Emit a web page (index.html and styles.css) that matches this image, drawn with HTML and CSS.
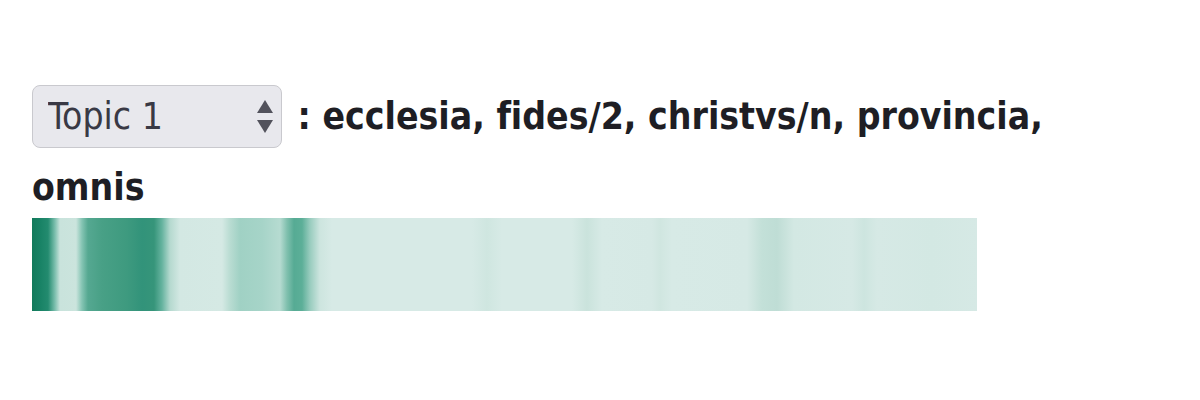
FILE: index.html
```html
<!DOCTYPE html>
<html lang="la">
<head>
<meta charset="utf-8">
<title>Topic 1</title>
<link rel="stylesheet" href="styles.css">
</head>
<body>
<main class="page">
  <h2 class="title">
    <span class="select-wrap">
      <select class="topic-select" aria-label="Topic">
        <option>Topic 1</option>
        <option>Topic 2</option>
        <option>Topic 3</option>
      </select>
      <svg class="select-arrows" width="16" height="34" viewBox="0 0 16 34" aria-hidden="true">
        <polygon points="8,0 16,13 0,13" />
        <polygon points="0,20 16,20 8,33" />
      </svg>
    </span>
    : ecclesia, fides/2, christvs/n, provincia, omnis
  </h2>
  <div class="strip"></div>
</main>
</body>
</html>
```

FILE: styles.css
```css
html, body {
  margin: 0;
  padding: 0;
  background: #ffffff;
}

.page {
  padding: 85px 0 0 32px;
  width: 1060px;
}

.title {
  margin: 0;
  font-family: "DejaVu Sans Condensed", "DejaVu Sans", sans-serif;
  font-stretch: condensed;
  font-weight: bold;
  font-size: 37px;
  line-height: 60px;
  color: #1e1e24;
  font-variant-ligatures: none;
}

.select-wrap {
  position: relative;
  display: inline-block;
  vertical-align: baseline;
  margin-right: 4px;
  margin-bottom: 10px;
}

.topic-select {
  -webkit-appearance: none;
  appearance: none;
  width: 250px;
  height: 63px;
  box-sizing: border-box;
  margin: 0;
  padding: 0 40px 0 15px;
  border: 1px solid #c9c9ce;
  border-radius: 8px;
  background: #e8e8ed;
  color: #393945;
  font-family: "DejaVu Sans Condensed", "DejaVu Sans", sans-serif;
  font-stretch: condensed;
  font-weight: normal;
  font-size: 37px;
  line-height: 61px;
  outline: none;
}

.select-arrows {
  position: absolute;
  right: 9px;
  top: 15px;
  fill: #52525c;
  pointer-events: none;
}

.strip {
  width: 945px;
  height: 93px;
  background: linear-gradient(to right,
    #127a5b 0px, #188265 8px, #238b6f 16px, #7cbfae 23px, #c9e3dc 28px,
    #cbe4dd 44px, #84c4b3 50px, #55a891 56px, #48a086 70px, #3e9a7f 95px,
    #32937a 110px, #36957a 122px, #66b39f 130px, #b5d9cf 138px, #d3e8e3 148px,
    #d5e9e4 190px, #b9dcd2 198px, #a0d1c4 208px, #a6d4c8 230px, #b6dbd1 248px,
    #80c0ae 255px, #56ab94 262px, #5caf98 270px, #98ccbe 278px, #cde5df 288px,
    #d7eae6 300px, #d7eae6 440px, #cfe6e0 455px, #d7eae6 470px, #d7eae6 540px,
    #cae3dc 555px, #d7eae6 570px, #d6e9e5 620px, #d0e6e0 628px, #d7eae6 640px,
    #d6e9e5 715px, #c3e0d8 730px, #bfddd5 745px, #d3e8e3 762px, #d6e9e5 820px,
    #cde5df 832px, #d6e9e5 845px, #d3e8e3 900px, #d6e9e5 945px);
}
```
